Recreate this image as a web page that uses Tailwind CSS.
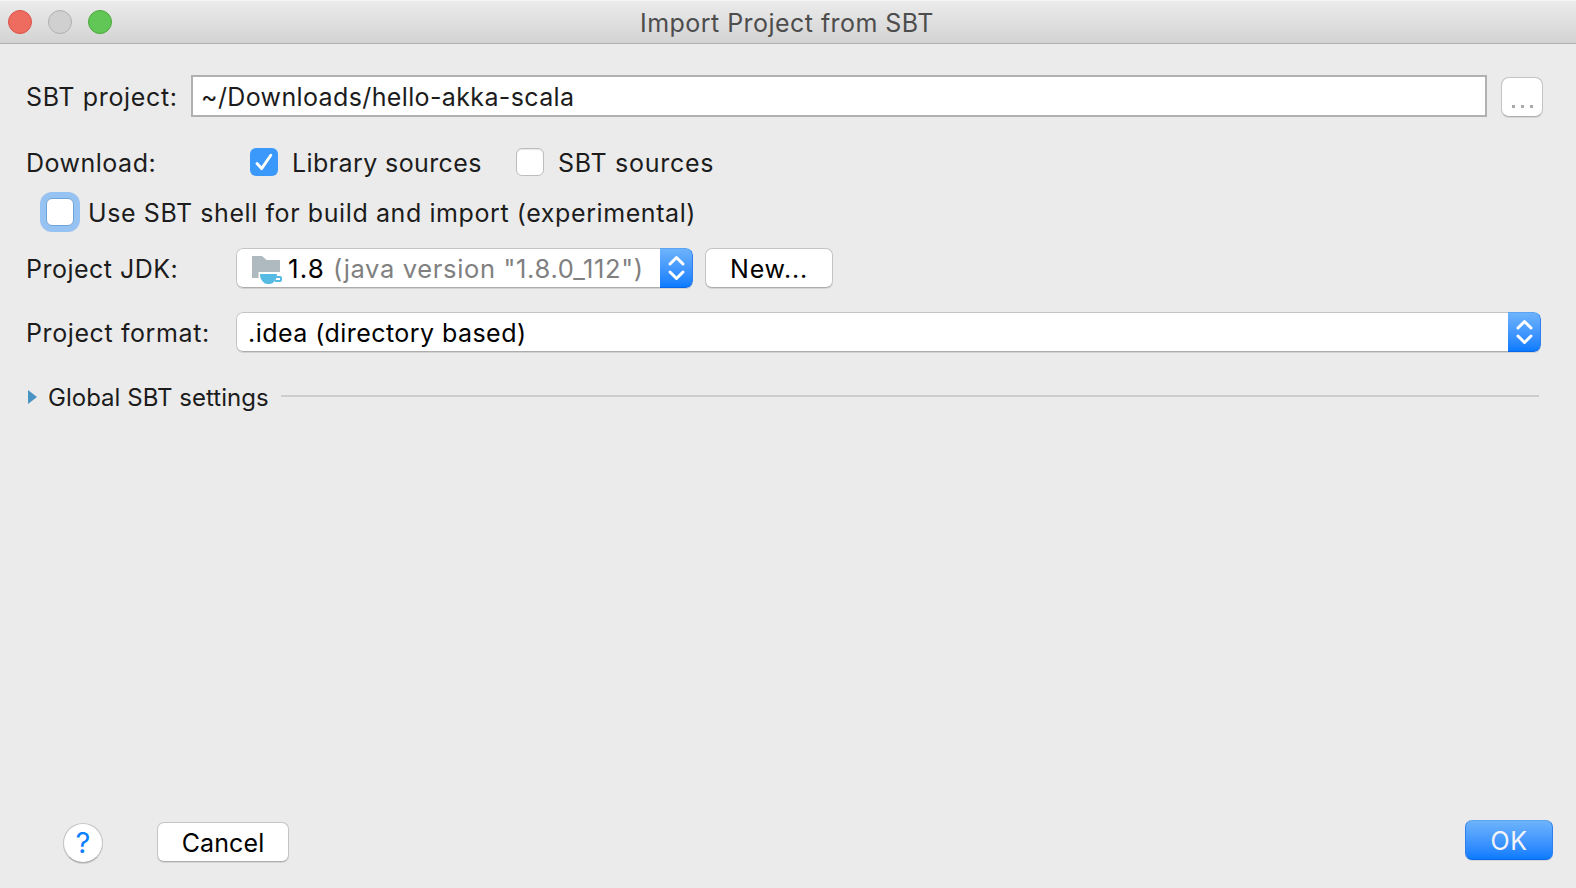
<!DOCTYPE html>
<html lang="en">
<head>
<meta charset="utf-8">
<title>Import Project from SBT</title>
<script src="https://cdn.jsdelivr.net/npm/@tailwindcss/browser@4"></script>
</head>
<body class="h-[888px] w-[1576px] overflow-hidden bg-[#ebebeb] font-['Inter','Liberation_Sans',sans-serif] text-[25px] leading-10 whitespace-nowrap text-[#1c1c1c]">
<div class="flex h-full flex-col">
  <!-- Title bar -->
  <header class="flex h-11 shrink-0 items-center gap-4 border-b border-[#b1b1b1] bg-linear-to-b from-[#ececec] to-[#d3d3d3] pl-2 shadow-[inset_0_1px_0_#f6f6f6]">
    <span class="size-6 rounded-full border border-[#dc5147] bg-[#ee6b5f]"></span>
    <span class="size-6 rounded-full border border-[#b0b0b0] bg-[#d0d0d0]"></span>
    <span class="size-6 rounded-full border border-[#4aa93c] bg-[#61c655]"></span>
    <h1 class="ml-[512px] pt-[3px] tracking-[0.46px] text-[#4d4d4d]">Import Project from SBT</h1>
  </header>

  <main class="flex grow flex-col pl-[26px]">
    <div class="mt-[31px] flex h-[42px] items-center">
      <label class="w-[165px] pt-0.5 tracking-[0.66px]">SBT project:</label>
      <div class="h-[42px] w-[1296px] border-2 border-[#b1b1b1] bg-white pl-2 leading-10 tracking-[0.37px]">~/Downloads/hello-akka-scala</div>
      <button class="mt-0.5 ml-3.5 flex h-10 w-[42px] items-end justify-center gap-1.5 rounded-lg border border-[#c4c4c4] border-b-[#adadad] bg-white pb-2 shadow-[0_1px_0_#d6d6d6]" aria-label="Browse">
        <i class="size-[3px] bg-[#a9a9a9]"></i><i class="size-[3px] bg-[#a9a9a9]"></i><i class="size-[3px] bg-[#a9a9a9]"></i>
      </button>
    </div>

    <div class="mt-[25px] flex h-10 items-center">
      <span class="w-[224px] pt-px tracking-[0.5px]">Download:</span>
      <span class="size-7 rounded-md bg-[#3b99fc]">
        <svg class="size-7" viewBox="0 0 28 28" fill="none" stroke="#fff" stroke-width="2.9" stroke-linecap="round" stroke-linejoin="round"><path d="M7 15.6 11.6 20.6 20.8 7.2"/></svg>
      </span>
      <span class="ml-3.5 w-[224px] pt-px tracking-[0.4px]">Library sources</span>
      <span class="size-7 rounded-md border border-[#bdbdbd] bg-white shadow-[inset_0_1px_1px_#e8e8e8]"></span>
      <span class="ml-3.5 pt-px tracking-[0.73px]">SBT sources</span>
    </div>

    <div class="mt-2.5 flex h-10 items-center pl-5">
      <span class="size-7 rounded-md border border-[#6fa3dc] bg-white shadow-[0_0_0_6px_#97c3f3]"></span>
      <span class="ml-3.5 pt-px tracking-[0.59px]">Use SBT shell for build and import (experimental)</span>
    </div>

    <div class="mt-4 flex h-10 items-center">
      <span class="w-[210px] pt-px tracking-[0.48px]">Project JDK:</span>
      <div class="flex h-10 w-[457px] overflow-hidden rounded-[7px] shadow-[0_1px_0_#d2d2d2]">
        <div class="flex grow rounded-l-[7px] border border-r-0 border-[#c4c4c4] border-b-[#adadad] bg-white">
          <svg class="mt-[7px] ml-[15px] h-[30px] w-8 shrink-0" viewBox="0 0 32 30">
            <path fill="#afb9c0" d="M0 0H10L14.5 4H28V16H6.5V22H0Z"/>
            <path fill="#55bbe2" d="M8 18H25Q25 24 20.5 27.2Q19.5 28 16.5 28T12.5 27.2Q8 24 8 18Z"/>
            <path fill="none" stroke="#55bbe2" stroke-width="2" d="M24 21H28Q29 21 29 22V24Q29 25 28 25H23"/>
          </svg>
          <span class="ml-1 w-[45px] text-[26px] tracking-[1.1px] text-black">1.8</span>
          <span class="text-[25.5px] tracking-[0.66px] text-[#808080]">(java version "1.8.0_112")</span>
        </div>
        <svg class="h-10 w-[33px] rounded-r-[7px] border border-l-0 border-t-[#5ba4f3] border-r-[#2f7fee] border-b-[#0a66e6] bg-linear-to-b from-[#6db3fb] to-[#067bff]" viewBox="0 1 32 38" fill="none" stroke="#fff" stroke-width="3" stroke-linecap="round" stroke-linejoin="round"><path d="M10 16 16.5 9.5 23 16M10 24 16.5 30.5 23 24"/></svg>
      </div>
      <button class="ml-3 h-10 w-32 rounded-[7px] border border-[#c4c4c4] border-b-[#adadad] bg-white leading-10 tracking-[0.8px] text-black shadow-[0_1px_0_#d6d6d6]">New...</button>
    </div>

    <div class="mt-6 flex h-10 items-center">
      <span class="w-[210px] pt-px tracking-[0.6px]">Project format:</span>
      <div class="flex h-10 w-[1305px] overflow-hidden rounded-[7px] shadow-[0_1px_0_#d2d2d2]">
        <div class="grow rounded-l-[7px] border border-r-0 border-[#c4c4c4] border-b-[#adadad] bg-white pl-[11px] tracking-[0.45px] text-black">.idea (directory based)</div>
        <svg class="h-10 w-[33px] rounded-r-[7px] border border-l-0 border-t-[#5ba4f3] border-r-[#2f7fee] border-b-[#0a66e6] bg-linear-to-b from-[#6db3fb] to-[#067bff]" viewBox="0 1 32 38" fill="none" stroke="#fff" stroke-width="3" stroke-linecap="round" stroke-linejoin="round"><path d="M10 16 16.5 9.5 23 16M10 24 16.5 30.5 23 24"/></svg>
      </div>
    </div>

    <div class="mt-[25px] flex h-10 items-center">
      <svg class="ml-0.5 h-3.5 w-[9px]" viewBox="0 0 9 14"><path fill="#4a94c4" d="M0 0 9 7 0 14Z"/></svg>
      <span class="ml-[11px] w-[233px] pt-0.5 text-[24px] tracking-[0.02px]">Global SBT settings</span>
      <span class="mb-0.5 h-0.5 w-[1258px] bg-[#cdcdcd]"></span>
    </div>

    <!-- Dialog buttons -->
    <footer class="mt-auto mb-[26px] flex h-[42px] items-start pl-[37px]">
      <button class="mt-[3px] size-10 rounded-full border border-[#c4c4c4] border-b-[#adadad] bg-white text-[29px] leading-[38px] text-[#0a7fff] shadow-[0_1px_0_#d0d0d0]">?</button>
      <button class="mt-0.5 ml-[54px] h-10 w-[132px] rounded-[7px] border border-[#c4c4c4] border-b-[#adadad] bg-white leading-10 tracking-[0.1px] text-black shadow-[0_1px_0_#d6d6d6]">Cancel</button>
      <button class="ml-[1176px] h-10 w-[88px] rounded-[7px] border border-t-[#5ba4f3] border-r-[#2f7fee] border-b-[#0a66e6] border-l-[#2f7fee] bg-linear-to-b from-[#6db3fb] to-[#067bff] leading-10 tracking-[0.5px] text-[#f4f4f8] shadow-[0_1px_0_#d6d6d6]">OK</button>
    </footer>
  </main>
</div>
</body>
</html>
